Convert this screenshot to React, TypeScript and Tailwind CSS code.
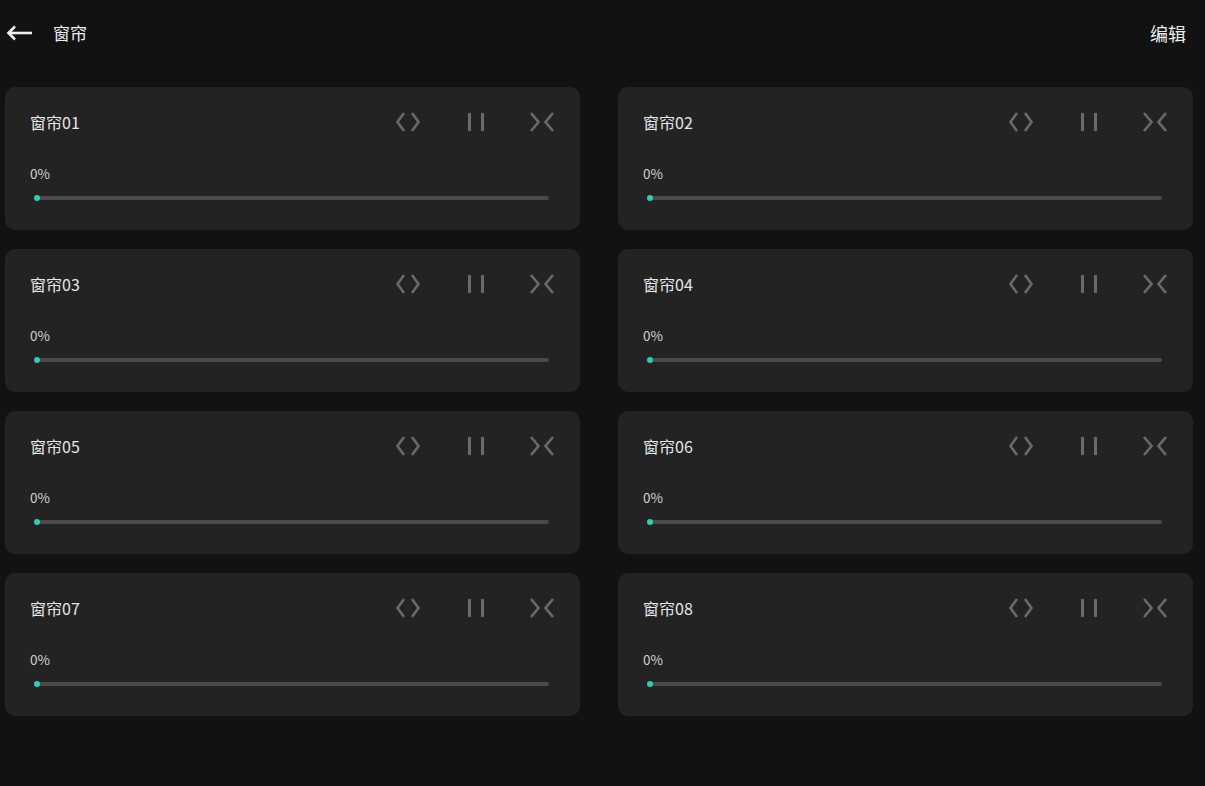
import React from "react";

const font = { fontFamily: '"Noto Sans CJK SC", "Noto Sans", sans-serif' };

function OpenIcon() {
  return (
    <svg width="26" height="20" viewBox="0 0 26 20" fill="none" stroke="#6a6a6a" strokeWidth="2.6" strokeLinecap="butt" strokeLinejoin="miter">
      <path d="M9 1 L2.5 10 L9 19" />
      <path d="M17 1 L23.5 10 L17 19" />
    </svg>
  );
}
function PauseIcon() {
  return (
    <svg width="20" height="20" viewBox="0 0 20 20" fill="#6a6a6a">
      <rect x="2" y="1" width="3" height="18" />
      <rect x="15" y="1" width="3" height="18" />
    </svg>
  );
}
function CloseIcon() {
  return (
    <svg width="26" height="20" viewBox="0 0 26 20" fill="none" stroke="#6a6a6a" strokeWidth="2.6" strokeLinecap="butt" strokeLinejoin="miter">
      <path d="M2 1 L9.5 10 L2 19" />
      <path d="M24 1 L16.5 10 L24 19" />
    </svg>
  );
}

function Card({ name }: { name: string }) {
  return (
    <div className="h-[143px] rounded-[10px] bg-[#232323] flex flex-col">
      <div className="flex items-center h-[36px] mt-[17px] pl-[25px] pr-[25px]">
        <span className="text-[16px] text-[#e6e6e6] leading-none">{name}</span>
        <div className="ml-auto flex items-center">
          <OpenIcon />
          <div className="ml-[45px]"><PauseIcon /></div>
          <div className="ml-[43px]"><CloseIcon /></div>
        </div>
      </div>
      <div className="pl-[25px] mt-[27px] text-[13.5px] leading-none text-[#d0d0d0]">0%</div>
      <div className="relative mx-[31px] mt-[15px] h-[4px] rounded-full bg-[#4a4a4a]">
        <div className="absolute left-[-2px] top-[-1px] w-[6px] h-[6px] rounded-full bg-[#33cbb8]" />
      </div>
    </div>
  );
}

export default function App() {
  const names = ["窗帘01", "窗帘02", "窗帘03", "窗帘04", "窗帘05", "窗帘06", "窗帘07", "窗帘08"];
  return (
    <div className="w-[1205px] h-[786px] bg-[#121212] overflow-hidden" style={font}>
      <div className="h-[66px] flex items-center pl-[6px] pr-[19px]">
        <svg width="27" height="16" viewBox="0 0 27 16" fill="none" stroke="#f0f0f0" strokeWidth="2.6">
          <path d="M26 8 H2.5" />
          <path d="M9 1.5 L2.5 8 L9 14.5" />
        </svg>
        <span className="ml-[20px] text-[17px] text-[#eeeeee]">窗帘</span>
        <span className="ml-auto text-[18px] text-[#eeeeee]">编辑</span>
      </div>
      <div className="grid grid-cols-2 gap-x-[38px] gap-y-[19px] pl-[5px] pr-[12px] mt-[21px]">
        {names.map((n) => (
          <Card key={n} name={n} />
        ))}
      </div>
    </div>
  );
}
